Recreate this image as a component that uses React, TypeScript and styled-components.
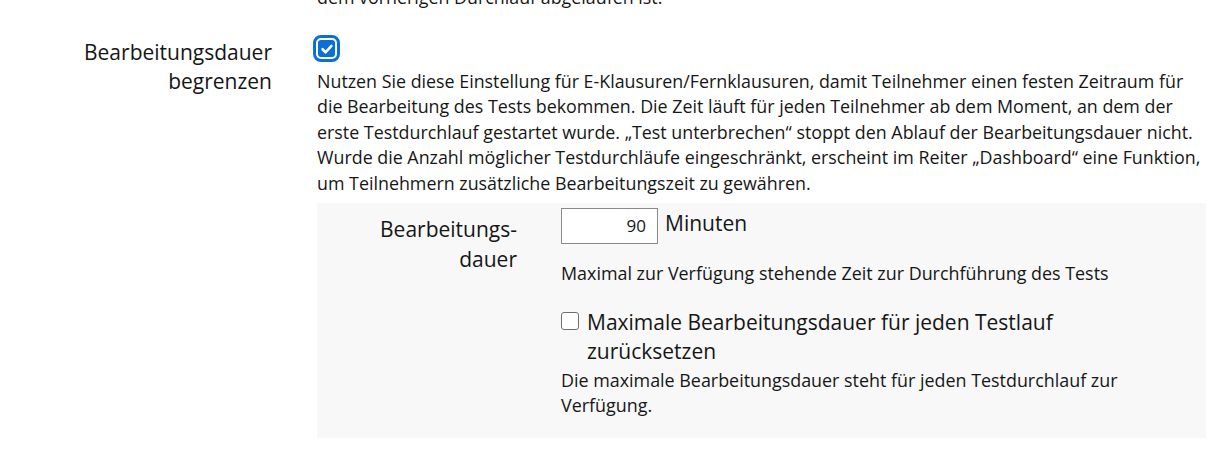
import React from 'react';
import styled, { createGlobalStyle } from 'styled-components';

const GlobalStyle = createGlobalStyle`
  body {
    margin: 0;
    background: #ffffff;
    font-family: "Open Sans", "Noto Sans", sans-serif;
    color: #161616;
  }
`;

const Form = styled.div`
  margin-top: -15px;
  padding-right: 10px;
`;

const Row = styled.div<{ labelWidth: number; gap: number }>`
  display: grid;
  grid-template-columns: ${({ labelWidth }) => labelWidth}px 1fr;
  column-gap: ${({ gap }) => gap}px;
`;

const Label = styled.div<{ padTop?: number; lineHeight?: number }>`
  text-align: right;
  font-size: 21px;
  line-height: ${({ lineHeight }) => lineHeight ?? 29.5}px;
  padding-top: ${({ padTop }) => padTop ?? 0}px;
`;

const Field = styled.div`
  min-width: 0;
`;

const Help = styled.p`
  margin: 0;
  font-size: 17.85px;
  line-height: 25.5px;
`;

const SmallHelp = styled.p<{ top?: number }>`
  margin: ${({ top }) => top ?? 0}px 0 0;
  font-size: 17.9px;
  line-height: 25px;
  max-width: 600px;
`;

const TailLine = styled(Help)`
  padding-left: 317px;
  margin-bottom: 23px;
`;

const Check = styled.span<{ checked?: boolean; focused?: boolean }>`
  display: inline-flex;
  align-items: center;
  justify-content: center;
  box-sizing: border-box;
  width: ${({ checked }) => (checked ? 17 : 18)}px;
  height: ${({ checked }) => (checked ? 17 : 18)}px;
  border-radius: 3px;
  flex: none;
  background: ${({ checked }) => (checked ? '#0b6fd6' : '#ffffff')};
  border: ${({ checked }) => (checked ? 'none' : '1.5px solid #6f6f6f')};
  outline: ${({ focused }) => (focused ? '3px solid #0b6fd6' : 'none')};
  outline-offset: 2px;
  svg {
    display: block;
  }
`;

const CheckHolder = styled.div`
  height: 30px;
  display: flex;
  align-items: center;
  padding-left: 1px;
  margin-bottom: 5px;
`;

const Panel = styled.div`
  background: #f8f8f8;
  margin-top: 6.5px;
  padding: 5px 0 20px;
`;

const InputLine = styled.div`
  display: flex;
  align-items: center;
  gap: 7px;
`;

const NumberInput = styled.input`
  box-sizing: border-box;
  width: 97px;
  height: 36px;
  border: 1px solid #8a8a8a;
  background: #ffffff;
  font-family: inherit;
  font-size: 17px;
  color: #161616;
  text-align: right;
  padding: 0 11px;
`;

const Unit = styled.span`
  font-size: 21px;
  line-height: 29px;
  margin-top: -4px;
`;

const CheckLine = styled.label`
  display: flex;
  align-items: flex-start;
  gap: 8px;
  margin-top: 22px;
  max-width: 600px;
  font-size: 21px;
  line-height: 29px;
  ${Check} {
    margin-top: 4px;
  }
`;

function Tick(): JSX.Element {
  return (
    <svg width="14" height="14" viewBox="0 0 12 12">
      <path d="M2.2 6.2 L4.8 8.8 L9.8 3.4" fill="none" stroke="#ffffff" strokeWidth="2.2" strokeLinecap="round" strokeLinejoin="round" />
    </svg>
  );
}

function App(): JSX.Element {
  return (
    <>
      <GlobalStyle />
      <Form>
        <TailLine>dem vorherigen Durchlauf abgelaufen ist.</TailLine>
        <Row labelWidth={272} gap={45}>
          <Label padTop={4}>
            Bearbeitungsdauer
            <br />
            begrenzen
          </Label>
          <Field>
            <CheckHolder>
              <Check checked focused>
                <Tick />
              </Check>
            </CheckHolder>
            <Help>
              Nutzen Sie diese Einstellung für E-Klausuren/Fernklausuren, damit Teilnehmer einen festen Zeitraum für
              <br />
              die Bearbeitung des Tests bekommen. Die Zeit läuft für jeden Teilnehmer ab dem Moment, an dem der
              <br />
              erste Testdurchlauf gestartet wurde. „Test unterbrechen“ stoppt den Ablauf der Bearbeitungsdauer nicht.
              <br />
              Wurde die Anzahl möglicher Testdurchläufe eingeschränkt, erscheint im Reiter „Dashboard“ eine Funktion,
              <br />
              um Teilnehmern zusätzliche Bearbeitungszeit zu gewähren.
            </Help>
            <Panel>
              <Row labelWidth={200} gap={44}>
                <Label padTop={6} lineHeight={30.5}>
                  Bearbeitungs-
                  <br />
                  dauer
                </Label>
                <Field>
                  <InputLine>
                    <NumberInput type="text" defaultValue="90" />
                    <Unit>Minuten</Unit>
                  </InputLine>
                  <SmallHelp top={17}>
                    Maximal zur Verfügung stehende Zeit zur Durchführung des Tests
                  </SmallHelp>
                  <CheckLine>
                    <Check />
                    <span>Maximale Bearbeitungsdauer für jeden Testlauf zurücksetzen</span>
                  </CheckLine>
                  <SmallHelp top={2}>
                    Die maximale Bearbeitungsdauer steht für jeden Testdurchlauf zur Verfügung.
                  </SmallHelp>
                </Field>
              </Row>
            </Panel>
          </Field>
        </Row>
      </Form>
    </>
  );
}

export default App;
